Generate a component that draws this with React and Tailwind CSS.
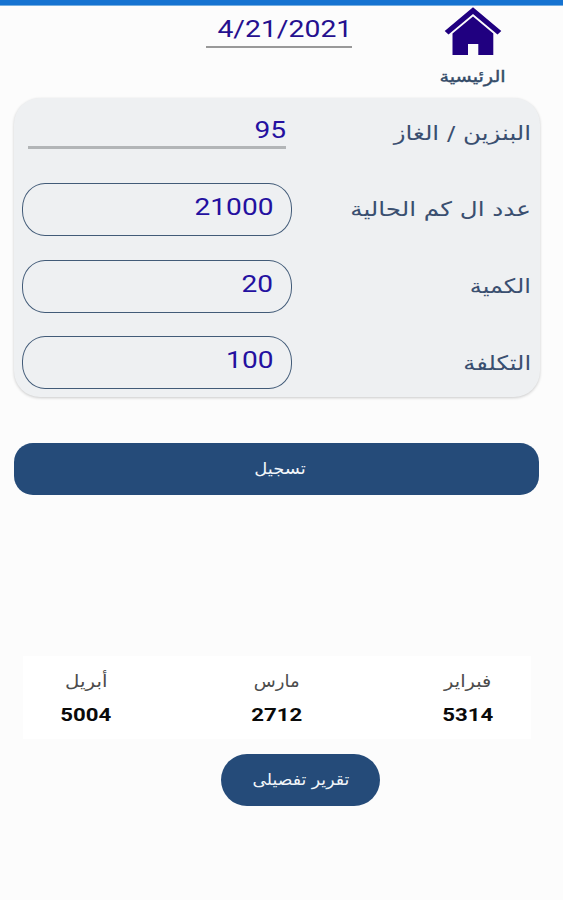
const latin = "font-['Roboto','Liberation_Sans',sans-serif]";

function Field({ label, labelClass, children }) {
  return (
    <div className="flex h-[53px] items-center justify-between">
      <span className={`inline-block origin-right whitespace-nowrap text-[20px] leading-[30px] text-[#3a4f70] ${labelClass}`}>
        {label}
      </span>
      {children}
    </div>
  );
}

function RoundInput({ value }) {
  return (
    <div className="flex h-[53px] w-[270px] items-start rounded-[23px/25px] border-[1.5px] border-[#425b78] pt-[8px] pr-[18px]">
      <span className={`inline-block origin-right scale-x-[1.17] text-[24px] leading-[30px] text-[#2410a0] ${latin}`}>{value}</span>
    </div>
  );
}

function Month({ name, total, nameClass }) {
  return (
    <div className="flex w-[126px] flex-col items-center">
      <span className={`inline-block text-[17px] leading-[26px] text-[#4c4c4c] ${nameClass}`}>{name}</span>
      <span className={`mt-[9px] inline-block scale-x-[1.17] text-[19px] leading-[24px] font-bold text-[#0a0a0a] ${latin}`}>{total}</span>
    </div>
  );
}

export default function App() {
  return (
    <div dir="rtl" lang="ar" className="flex h-[900px] w-[563px] flex-col overflow-hidden bg-[#fcfcfc] font-['DejaVu_Sans',sans-serif]">
      <div className="h-[6px] shrink-0 border-b border-[#75aee0] bg-[#1673d1]" />
      <header className="flex h-[92px] shrink-0 pr-[41px]">
        <div className="flex w-[98px] flex-col items-center">
          <svg className="h-[50px] w-[58px]" viewBox="0 0 58 50" fill="#200080">
            <path d="M29 1.200 L57.300 25 L53.500 28.600 L29 8 L4.500 28.600 L0.700 25 Z" />
            <path d="M29 10.500 L49.300 27.500 V49 H34.300 V38 H24 V49 H8.500 V27.500 Z" />
          </svg>
          <span className="mt-[8px] inline-block scale-x-[1.2] text-[16px] leading-[26px] whitespace-nowrap text-[#334b68] [-webkit-text-stroke:0.4px_#334b68]">الرئيسية</span>
        </div>
        <div className="mr-[72px] flex h-[42px] w-[146px] items-start border-b-2 border-[#999999] pt-[8px]">
          <span dir="ltr" className={`inline-block origin-right scale-x-[1.18] text-[24px] leading-[30px] text-[#25108f] ${latin}`}>4/21/2021</span>
        </div>
      </header>

      <main className="mr-[23px] ml-[14px] flex h-[299px] shrink-0 flex-col gap-[23.800px] rounded-[26px] bg-[#eef0f2] pt-[8px] pr-[9px] pl-[8px] shadow-[0_1px_3px_rgba(0,0,0,0.2)]">
        <Field label="البنزين / الغاز" labelClass="scale-x-[1.225]">
          <div className="ml-[6px] flex h-[43px] w-[258px] items-start self-start border-b-[3px] border-[#b2b5b7] pt-[9px]">
            <span className={`inline-block origin-right scale-x-[1.17] text-[24px] leading-[30px] text-[#2410a0] ${latin}`}>95</span>
          </div>
        </Field>
        <Field label="عدد ال كم الحالية" labelClass="scale-x-[1.23]"><RoundInput value="21000" /></Field>
        <Field label="الكمية" labelClass="scale-x-[1.2]"><RoundInput value="20" /></Field>
        <Field label="التكلفة" labelClass="scale-x-[1.21]"><RoundInput value="100" /></Field>
      </main>

      <button className="mt-[46px] mr-[24px] ml-[14px] h-[52px] shrink-0 rounded-[19px] bg-[#254b79] text-[16px] text-[#f2f6fa]">
        <span className="ml-[6px] inline-block scale-x-[1.12]">تسجيل</span>
      </button>

      <section className="mt-[161px] mr-[32px] ml-[23px] flex h-[83px] shrink-0 justify-between bg-white pt-[12px]">
        <Month name="فبراير" total="5314" nameClass="scale-x-[1.14]" />
        <Month name="مارس" total="2712" nameClass="scale-x-[1.06]" />
        <Month name="أبريل" total="5004" nameClass="scale-x-[1.16]" />
      </section>

      <button className="mt-[15px] mr-[183px] h-[52px] w-[159px] shrink-0 rounded-full bg-[#254b79] text-[16px] whitespace-nowrap text-[#f2f6fa]">
        <span className="inline-block scale-x-[1.08]">تقرير تفصيلى</span>
      </button>
    </div>
  );
}
